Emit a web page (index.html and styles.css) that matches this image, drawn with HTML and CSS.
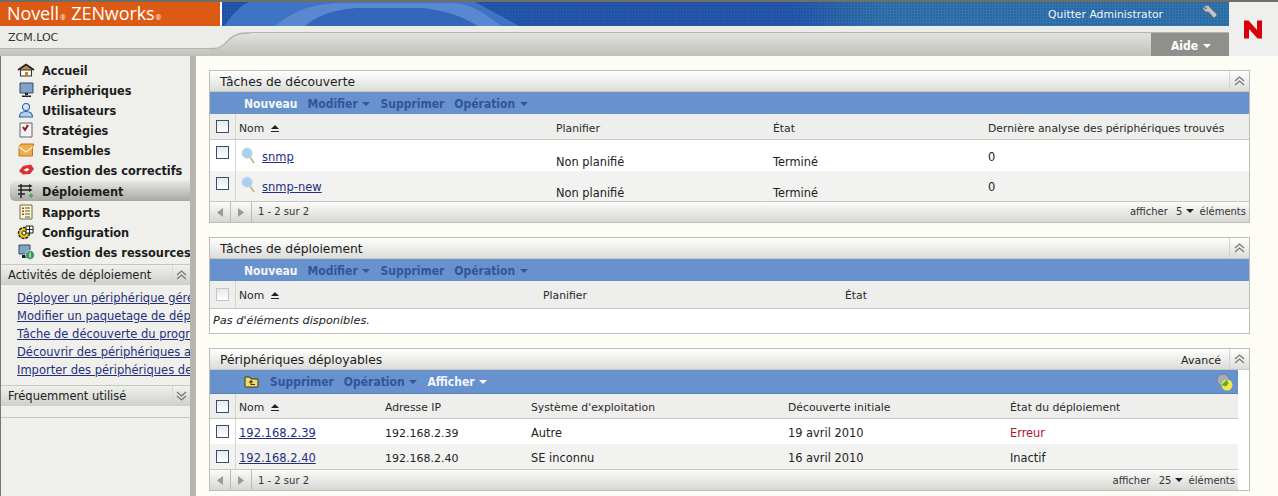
FILE: index.html
```html
<!DOCTYPE html>
<html lang="fr">
<head>
<meta charset="utf-8">
<title>Novell ZENworks</title>
<link rel="stylesheet" href="styles.css">
</head>
<body>
<header class="top">
  <div class="top-main">
    <div class="top-row">
      <div class="brand">Novell<small>®</small> ZENworks<small>®</small></div>
      <div class="banner">
        <svg class="swoosh" viewBox="0 0 320 24"><path d="M2 24C12 10 20 3 27 0H253L297 24Z" fill="#3f76c6"/><path d="M53 24C70 10 90 1 120 1H230C250 1 262 12 280 24H255C240 14 225 9 200 6H135C110 8 95 14 83 24Z" fill="#5c8bd3"/><path d="M83 24C95 14 110 8 135 6H200C225 9 240 14 255 24Z" fill="#3468ba"/></svg>
        <span class="logout">Quitter Administrator</span>
        <svg class="key" width="15" height="13" viewBox="0 0 15 13"><path d="M1 3.500L3.500.5h3l2 2.500L14.500 9v1.500L13 12.500h-1.500L6.500 7H3.500Z" fill="#c3c7c7" stroke="#6d7478" stroke-width=".9"/><circle cx="3.800" cy="3.300" r="1" fill="#5c6468"/></svg>
      </div>
    </div>
    <div class="sub-row">
      <div class="zone">ZCM.LOC</div>
      <svg class="curve" width="40" height="30" viewBox="0 0 40 30"><defs><linearGradient id="cg" gradientUnits="userSpaceOnUse" x1="0" y1="7" x2="0" y2="30"><stop offset="0" stop-color="#e2e2de"/><stop offset="1" stop-color="#c0c0ba"/></linearGradient></defs><path d="M0 0H40V30H0Z" fill="#ecece9"/><path d="M0 22.500H4C17 22.500 17 7 36 7H40V30H0Z" fill="url(#cg)"/><path d="M0 22.500H4C17 22.500 17 7 36 7H40" fill="none" stroke="#b4b4ae" stroke-width="1.300"/></svg>
      <div class="subfill"><div class="aide">Aide <i class="caret caret-white"></i></div></div>
    </div>
  </div>
  <div class="logo-box"><svg width="20" height="19" viewBox="0 0 20 19"><path d="M1 18.500V.5h4.500l8.500 9.500V.5h5v18h-4.500L6 9v9.500z" fill="#d8000d"/></svg></div>
</header>

<div class="layout">
  <aside class="side">
    <nav class="nav">
      <a class="nav-item"><svg viewBox="0 0 18 16"><path d="M1 8L9 2.500 17 8" fill="#c08a4a" stroke="#222" stroke-width="1.600"/><path d="M3.500 8h11v6h-11z" fill="#fff" stroke="#333" stroke-width="1.100"/><path d="M8 10h3v4H8z" fill="#c9801e"/></svg>Accueil</a>
      <a class="nav-item"><svg viewBox="0 0 18 16"><path d="M3 1h13v10H3z" fill="#7fa4c9" stroke="#3a4a5a"/><path d="M8 11h3v2H8zM5 13.500h9V15H5z" fill="#1d2730"/></svg>Périphériques</a>
      <a class="nav-item"><svg viewBox="0 0 18 16"><circle cx="9" cy="5" r="3.500" fill="#d6e6f4" stroke="#2c65a8" stroke-width="1.100"/><path d="M2.500 15c0-4 2.500-5.500 6.500-5.500s6.500 1.500 6.500 5.500z" fill="#b3d2ec" stroke="#2c65a8" stroke-width="1.100"/></svg>Utilisateurs</a>
      <a class="nav-item"><svg viewBox="0 0 18 16"><path d="M3 1h12v14H3z" fill="#f4f4f4" stroke="#666"/><path d="M6 5l2 3 3-5" fill="none" stroke="#a01020" stroke-width="2"/></svg>Stratégies</a>
      <a class="nav-item"><svg viewBox="0 0 18 16"><path d="M2 5l2-3h13l-1.500 3v9H2z" fill="#f0ad4e" stroke="#b67a25"/><path d="M2 5l7 5 6.500-5" fill="none" stroke="#fff3d8" stroke-width="1.300"/></svg>Ensembles</a>
      <a class="nav-item"><svg viewBox="0 0 18 16"><path d="M2 9l4-5 8-1.500L17 7l-4 5-7 .5z" fill="#d9303a"/><path d="M6.500 8L10 6l2.500 1.500-3 2z" fill="#fff"/></svg>Gestion des correctifs</a>
      <a class="nav-item active"><svg viewBox="0 0 18 16"><path d="M1 3h11M1 7h11M1 11h7M4 1v14" stroke="#222" stroke-width="1.500" fill="none"/><path d="M12 1l3.500 2L12 5zM12 5l3.500 2L12 9z" fill="#222"/><path d="M14 10l2.500 2.500L14 15l-2.500-2.500z" fill="#3fae58"/></svg>Déploiement</a>
      <a class="nav-item"><svg viewBox="0 0 18 16"><path d="M3 1h12v14H3z" fill="#fff7cc" stroke="#6b6b45"/><path d="M8 4h5M8 7h5M8 10h5M8 13h5" stroke="#555"/><path d="M5 3.500h2v1.500H5zM5 6.500h2V8H5z" fill="#c9301c"/><path d="M5 9.500h2V11H5z" fill="#2e7d32"/></svg>Rapports</a>
      <a class="nav-item"><svg viewBox="0 0 18 16"><circle cx="7" cy="9" r="5.500" fill="#e7c323" stroke="#2a2a10" stroke-width="1.500" stroke-dasharray="3 1"/><circle cx="7" cy="9" r="2" fill="#fff" stroke="#2a2a10"/><path d="M9 2h7v7H9z" fill="#fff" stroke="#222"/><path d="M12.500 2v7M9 5.500h7" stroke="#222"/></svg>Configuration</a>
      <a class="nav-item"><svg viewBox="0 0 18 16"><path d="M2 1h11v9H2z" fill="#7fa4c9" stroke="#3a4a5a"/><path d="M5 11h5v3H5z" fill="#1d2730"/><circle cx="13" cy="11" r="4.500" fill="#3c9a5f" stroke="#fff" stroke-width=".6"/><path d="M13 8.500v5" stroke="#fff"/></svg>Gestion des ressources</a>
    </nav>
    <section class="side-group">
      <div class="side-head"><span class="side-title">Activités de déploiement</span><span class="side-tog"><svg class="chev" viewBox="0 0 11 10"><path d="M1 5l4.500-4L10 5M1 9l4.500-4L10 9" fill="none"/></svg></span></div>
      <div class="side-links">
        <a>Déployer un périphérique géré</a>
        <a>Modifier un paquetage de dép</a>
        <a>Tâche de découverte du progr</a>
        <a>Découvrir des périphériques a</a>
        <a>Importer des périphériques de</a>
      </div>
    </section>
    <section class="side-group freq">
      <div class="side-head"><span class="side-title">Fréquemment utilisé</span><span class="side-tog"><svg class="chev" viewBox="0 0 11 10"><path d="M1 1l4.500 4L10 1M1 5l4.500 4L10 5" fill="none"/></svg></span></div>
    </section>
  </aside>

  <main class="main">
    <section class="panel">
      <div class="p-head"><h2>Tâches de découverte</h2><span class="p-tog"><svg class="chev" viewBox="0 0 11 10"><path d="M1 5l4.500-4L10 5M1 9l4.500-4L10 9" fill="none"/></svg></span></div>
      <div class="bar"><b class="on">Nouveau</b><b>Modifier <i class="caret"></i></b><b>Supprimer</b><b>Opération <i class="caret"></i></b></div>
      <div class="row thead t1"><span class="ck"><i class="box"></i></span><span class="nm">Nom <i class="sort"></i></span><span>Planifier</span><span>État</span><span>Dernière analyse des périphériques trouvés</span></div>
      <div class="row tr t1 r1"><span class="ck"><i class="box"></i></span><span class="nm"><svg class="mag" viewBox="0 0 16 18"><path d="M9 10l5 7" stroke="#c9a566" stroke-width="1.500"/><circle cx="6.500" cy="6.500" r="5.500" fill="#a9d1ef" stroke="#c6dcec"/></svg><a>snmp</a></span><span class="low">Non planifié</span><span class="low">Terminé</span><span>0</span></div>
      <div class="row tr t1 alt r2"><span class="ck"><i class="box"></i></span><span class="nm"><svg class="mag" viewBox="0 0 16 18"><path d="M9 10l5 7" stroke="#c9a566" stroke-width="1.500"/><circle cx="6.500" cy="6.500" r="5.500" fill="#a9d1ef" stroke="#c6dcec"/></svg><a>snmp-new</a></span><span class="low">Non planifié</span><span class="low">Terminé</span><span>0</span></div>
      <div class="foot foot-up"><span class="pg"><svg width="6" height="9" viewBox="0 0 6 9"><path d="M6 0v9L0 4.500z"/></svg></span><span class="pg"><svg width="6" height="9" viewBox="0 0 6 9"><path d="M0 0v9l6-4.500z"/></svg></span><span class="count">1 - 2 sur 2</span><span class="per">afficher <span class="n">5</span><i class="caret caret-dark"></i> éléments</span></div>
    </section>

    <section class="panel">
      <div class="p-head"><h2>Tâches de déploiement</h2><span class="p-tog"><svg class="chev" viewBox="0 0 11 10"><path d="M1 5l4.500-4L10 5M1 9l4.500-4L10 9" fill="none"/></svg></span></div>
      <div class="bar"><b class="on">Nouveau</b><b>Modifier <i class="caret"></i></b><b>Supprimer</b><b>Opération <i class="caret"></i></b></div>
      <div class="row thead t2 tall"><span class="ck"><i class="box dim"></i></span><span class="nm">Nom <i class="sort"></i></span><span>Planifier</span><span>État</span></div>
      <div class="empty">Pas d'éléments disponibles.</div>
    </section>

    <section class="panel">
      <div class="p-head"><h2>Périphériques déployables</h2><span class="adv">Avancé</span><span class="p-tog"><svg class="chev" viewBox="0 0 11 10"><path d="M1 5l4.500-4L10 5M1 9l4.500-4L10 9" fill="none"/></svg></span></div>
      <div class="inner">
        <div class="bar bar3"><svg class="folder" width="15" height="12" viewBox="0 0 15 12"><path d="M1 3V1h5l1 2h7v8H1z" fill="#f0dc6a" stroke="#3c3a10"/><path d="M7 4L4.500 6.500H6.500V9H11V8H7.500V6.500H9.500z" fill="#3c3a10"/></svg><b>Supprimer</b><b>Opération <i class="caret"></i></b><b class="on">Afficher <i class="caret caret-white"></i></b><svg class="filter" width="17" height="18" viewBox="0 0 17 18"><circle cx="7" cy="7" r="6" fill="#a5adb5" stroke="#76808a"/><circle cx="11" cy="12" r="5.500" fill="#f1e84a"/><path d="M5.500 12L11 6.500l1.500 4-2.500 3z" fill="#5ea83a"/></svg></div>
        <div class="row thead t3"><span class="ck"><i class="box"></i></span><span class="nm">Nom <i class="sort"></i></span><span>Adresse IP</span><span>Système d'exploitation</span><span>Découverte initiale</span><span>État du déploiement</span></div>
        <div class="row tr t3 r3"><span class="ck"><i class="box"></i></span><span class="nm"><a>192.168.2.39</a></span><span class="ip">192.168.2.39</span><span>Autre</span><span>19 avril 2010</span><span class="err">Erreur</span></div>
        <div class="row tr t3 alt r3"><span class="ck"><i class="box"></i></span><span class="nm"><a>192.168.2.40</a></span><span class="ip">192.168.2.40</span><span>SE inconnu</span><span>16 avril 2010</span><span>Inactif</span></div>
        <div class="foot"><span class="pg"><svg width="6" height="9" viewBox="0 0 6 9"><path d="M6 0v9L0 4.500z"/></svg></span><span class="pg"><svg width="6" height="9" viewBox="0 0 6 9"><path d="M0 0v9l6-4.500z"/></svg></span><span class="count">1 - 2 sur 2</span><span class="per">afficher <span class="n">25</span><i class="caret caret-dark"></i> éléments</span></div>
      </div>
    </section>
  </main>
</div>
</body>
</html>
```

FILE: styles.css
```css
* { box-sizing: border-box; }
html, body { margin: 0; height: 100%; }
body { width: 1278px; height: 496px; overflow: hidden; background: #fdfdf6; font-family: "DejaVu Sans", sans-serif; font-size: 11px; color: #222; }
a { color: #252f7e; }
svg { display: block; flex: none; }

/* Header */
.top { display: flex; height: 56px; border-top: 2px solid #6f6f6a; }
.top-main { flex: 1; min-width: 0; display: flex; flex-direction: column; }
.top-row { display: flex; height: 24px; background: #fff; }
.brand { height: 24px; width: 220px; flex: none; background: #dc5a14; color: #fff; font-family: "Open Sans", sans-serif; font-size: 18px; line-height: 23px; padding-left: 7px; letter-spacing: -.1px; }
.brand small { font-size: 7px; margin: 0 1px; }
.banner { flex: 1; margin-left: 2px; display: flex; align-items: center; justify-content: flex-end; position: relative; color: #fff;
  background-image: radial-gradient(circle at 1px 1px, rgba(20,50,120,.22) 1px, transparent 1px), linear-gradient(90deg, #2558ad 0, #2558ad 570px, #3276ad 660px);
  background-size: 3px 3px, 100% 100%; }
.swoosh { position: absolute; left: 0; top: 0; width: 320px; height: 24px; opacity: .95; }
.logout { position: relative; font-size: 10.800px; margin-right: 39px; color: #f1f5f8; }
.key { position: relative; margin-right: 12px; margin-top: -5px; }
.sub-row { flex: 1; display: flex; }
.zone { width: 210px; flex: none; height: 30px; padding-left: 8px; font-size: 11px; line-height: 23px; color: #333; background: linear-gradient(#ecece9 0 22px, #b4b4ae 22px 23px, #cfcfca 23px, #c0c0ba 100%); }
.curve { width: 40px; height: 30px; }
.subfill { flex: 1; display: flex; justify-content: flex-end; align-items: flex-end; height: 30px; background: linear-gradient(#ecece9 0 6px, #b4b4ae 6px 7px, #e2e2de 7px, #c0c0ba 100%); }
.aide { width: 78px; height: 23px; background: #8f908b; color: #fff; font-weight: bold; font-stretch: condensed; font-size: 12px; line-height: 26px; padding-left: 20px; }
.logo-box { width: 49px; flex: none; background: #efefed; display: flex; align-items: center; justify-content: center; padding: 0 2px 0 0; }

.caret { display: inline-block; width: 0; height: 0; border-left: 4px solid transparent; border-right: 4px solid transparent; border-top: 4px solid #33549b; margin-left: 1px; vertical-align: 2px; }
.caret-white { border-top-color: #fff; }
.caret-dark { border-top-color: #222; margin: 0 2px 0 4px; }

/* Layout */
.layout { display: flex; height: 440px; }
.side { width: 196px; flex: none; background: #efefec; border-left: 1px solid #777; border-right: 6px solid #b6b6ae; overflow: hidden; display: flex; flex-direction: column; padding-top: 4px; }
.nav { padding-bottom: 2px; }
.nav-item { display: flex; align-items: center; height: 20px; padding-left: 16px; font-weight: bold; font-stretch: condensed; font-size: 12.600px; color: #1c1c1c; white-space: nowrap; gap: 7px; }
.nav-item svg { width: 18px; height: 16px; }
.nav-item.active { margin: 1px 0 1px 9px; padding-left: 7px; border-radius: 5px 0 0 5px; background: linear-gradient(#e6e6e2, #a9a9a3); width: 180px; }
.side-group { border-top: 1px solid #c8c8c3; }
.side-head { display: flex; align-items: center; height: 20px; background: linear-gradient(#f0f0ed, #cfcfca); }
.side-title { flex: 1; padding-left: 7px; font-size: 11.500px; color: #222; }
.side-tog { width: 18px; height: 20px; border-left: 1px solid #d8d8d3; display: flex; align-items: center; justify-content: center; }
.chev { width: 11px; height: 10px; }
.chev path { stroke: #777; stroke-width: 1.300; }
.side-links { padding: 4px 0 0 16px; height: 100px; }
.side-links a { display: block; height: 18px; line-height: 18px; font-size: 11.500px; text-decoration: underline; white-space: nowrap; overflow: hidden; }
.freq { border-bottom: 1px solid #c8c8c3; height: 33px; }

/* Panels */
.main { flex: 1; padding: 14px 28px 0 13px; display: flex; flex-direction: column; gap: 14px; }
.panel { border: 1px solid #bdbdb9; background: #fff; }
.p-head { height: 21px; display: flex; align-items: center; background: linear-gradient(#fff, #dcdcd8); border-bottom: 1px solid #c8c8c3; }
.p-head h2 { flex: 1; margin: 0; padding: 2px 0 0 10px; font-weight: normal; font-size: 12.300px; color: #1c1c1c; }
.adv { font-size: 11px; margin-right: 8px; color: #222; padding-top: 2px; }
.p-tog { width: 20px; height: 20px; border-left: 1px solid #d4d4d0; display: flex; align-items: center; justify-content: center; }
.bar { height: 22px; background: #6792cd; display: flex; align-items: center; padding: 1px 0 0 34px; gap: 10px; font-size: 12px; font-stretch: condensed; }
.bar b { color: #33549b; white-space: nowrap; }
.bar b.on { color: #f3f6fb; }
.bar3 { height: 24px; border-bottom: 1px solid #5b80b5; }
.folder { margin-right: 1px; }
.filter { margin-left: auto; margin-right: 5px; }
.inner { margin-right: 11px; }

.row { display: grid; align-items: center; font-size: 10.800px; }
.thead { height: 26px; background: #eeeeec; border-bottom: 1px solid #c8c8c3; color: #2a2a2a; }
.thead span:not(.ck) { padding-top: 2px; }
.t1.thead span:not(.ck) { padding-top: 4px; }
.tall { height: 28px; }
.t2.tall span:not(.ck) { padding-top: 2px; }
.t1 { grid-template-columns: 26px 320px 217px 215px 1fr; }
.t2 { grid-template-columns: 26px 307px 302px 1fr; }
.t3 { grid-template-columns: 26px 149px 146px 257px 222px 1fr; height: 25px; }
.ck { height: 100%; display: flex; align-items: center; justify-content: center; border-right: 1px solid #d6d6d2; }
.nm { padding-left: 3px; display: flex; align-items: center; }
.box { display: block; width: 13px; height: 13px; border: 1px solid #33506e; background: linear-gradient(#e8e8e8, #fff); }
.box.dim { border-color: #c6c6c6; }
.sort { display: inline-block; width: 8px; height: 7px; margin-left: 7px; border-bottom: 1px solid #222; position: relative; }
.sort::before { content: ""; position: absolute; left: 0; top: 0; border-left: 4px solid transparent; border-right: 4px solid transparent; border-bottom: 4px solid #222; }
.tr { font-size: 11.400px; }
.r1, .r2 { height: 30px; }
.r1 { height: 31px; }
.r1 span:not(.ck) { padding-top: 3px; }
.r2 span:not(.ck) { padding-top: 1px; }
.r1 span.low, .r2 span.low { padding-top: 13px; }
.r3 { height: 25px; }
.r3 span:not(.ck) { padding-top: 3px; }
.alt { background: #f2f2f1; }
.r1 .ck, .r2 .ck { align-items: flex-start; padding-top: 6px; }
.mag { width: 15px; height: 17px; margin: 0 6px 4px 2px; }
.tr a { text-decoration: underline; font-size: 11.500px; }
.ip { font-size: 11px; }
.err { color: #b5122a; }
.foot { height: 21px; display: flex; align-items: center; border-top: 1px solid #c8c8c3; background: linear-gradient(#fbfbfa, #d6d6d2); font-size: 10px; color: #333; }
.foot-up .count, .foot-up .per { padding-bottom: 2px; }
.pg { width: 21px; height: 100%; display: flex; align-items: center; justify-content: center; border-right: 1px solid #bbb; }
.pg svg { fill: #9a9a9a; }
.count { padding-left: 6px; flex: 1; }
.per { padding-right: 3px; }
.n { margin-left: 5px; }
.empty { height: 24px; padding-left: 3px; line-height: 23px; font-style: italic; font-size: 11.300px; color: #222; }
```
